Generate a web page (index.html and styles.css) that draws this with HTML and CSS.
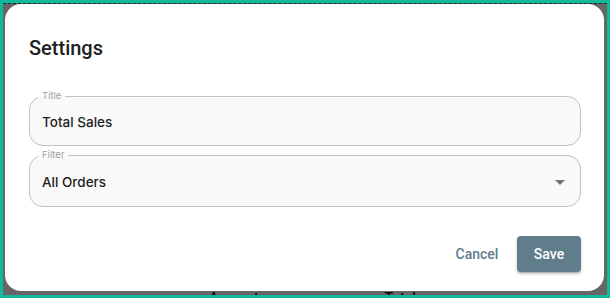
FILE: index.html
```html
<!DOCTYPE html>
<html>
<head>
<meta charset="utf-8">
<link rel="stylesheet" href="styles.css">
</head>
<body>
<div class="frame">
  <div class="page">
    <div class="table-head">
      <span class="col col-amount">Amount</span>
      <span class="col col-total">Total</span>
    </div>
  </div>
  <div class="overlay">
    <div class="dialog">
      <h2 class="dialog-title">Settings</h2>
      <div class="dialog-content">
        <fieldset class="field field-title">
          <legend class="field-label">Title</legend>
          <div class="field-row">
            <span class="field-value">Total Sales</span>
          </div>
        </fieldset>
        <fieldset class="field field-select">
          <legend class="field-label">Filter</legend>
          <div class="field-row">
            <span class="field-value">All Orders</span>
            <svg class="select-arrow" width="10" height="5" viewBox="0 0 10 5"><path d="M0 0 L10 0 L5 5 Z" fill="#757575"/></svg>
          </div>
        </fieldset>
      </div>
      <div class="dialog-actions">
        <button class="btn btn-text">Cancel</button>
        <button class="btn btn-contained">Save</button>
      </div>
    </div>
  </div>
</div>
</body>
</html>
```
FILE: styles.css
```css
html, body {
  margin: 0;
  padding: 0;
}
body {
  width: 610px;
  height: 298px;
  overflow: hidden;
  font-family: Roboto, "Liberation Sans", sans-serif;
}
.frame {
  position: relative;
  box-sizing: border-box;
  width: 610px;
  height: 298px;
  border: 3px solid #12b89a;
  background: #ffffff;
  overflow: hidden;
}
.page {
  box-sizing: border-box;
  height: 100%;
  border-top: 1px dashed #0f8f78;
  padding-top: 286px;
}
.table-head {
  display: flex;
  padding-left: 206px;
  gap: 126px;
  font-size: 14px;
  font-weight: 500;
  color: #111;
  line-height: 16px;
}
.overlay {
  position: absolute;
  inset: 0;
  background: rgba(0, 0, 0, 0.6);
  padding: 1px 3px 4px 2px;
  display: flex;
}
.dialog {
  flex: 1;
  background: #ffffff;
  border-radius: 16px;
  display: flex;
  flex-direction: column;
  padding: 0 23px 19px 24px;
}
.dialog-title {
  margin: 0;
  padding-top: 28px;
  font-size: 20px;
  line-height: 32px;
  font-weight: 500;
  color: #212121;
}
.dialog-content {
  margin-top: 26px;
  display: flex;
  flex-direction: column;
  gap: 3px;
}
.field {
  margin: 0;
  min-width: 0;
  border: 1px solid #c2c2c2;
  border-radius: 14px;
  background: #f9f9f9;
  padding: 10px 15px 13px 12px;
}
.field-select {
  padding-top: 11px;
  padding-bottom: 14px;
}
.field-label {
  padding: 0 4px;
  margin-left: -4px;
  font-family: Inter, "Noto Sans", sans-serif;
  font-size: 9.5px;
  line-height: 12px;
  color: #a0a0a0;
}
.field-row {
  display: flex;
  align-items: center;
  height: 20px;
}
.field-value {
  flex: 1;
  font-family: Inter, "Noto Sans", sans-serif;
  font-size: 13.5px;
  font-weight: 500;
  color: #1f1f1f;
  line-height: 20px;
}
.select-arrow {
  display: block;
}
.dialog-actions {
  margin-top: auto;
  display: flex;
  justify-content: flex-end;
  align-items: center;
  gap: 8px;
}
.btn {
  font-family: Roboto, "Liberation Sans", sans-serif;
  font-size: 14px;
  font-weight: 500;
  min-width: 64px;
  height: 36px;
  padding: 0 8px;
  border: none;
  border-radius: 4px;
  cursor: pointer;
}
.btn-text {
  background: transparent;
  color: #5f7c8a;
}
.btn-contained {
  background: #607d8b;
  color: #ffffff;
  padding: 0 16px;
  box-shadow: 0 2px 3px rgba(0, 0, 0, 0.22), 0 1px 1px rgba(0, 0, 0, 0.14);
}
```
